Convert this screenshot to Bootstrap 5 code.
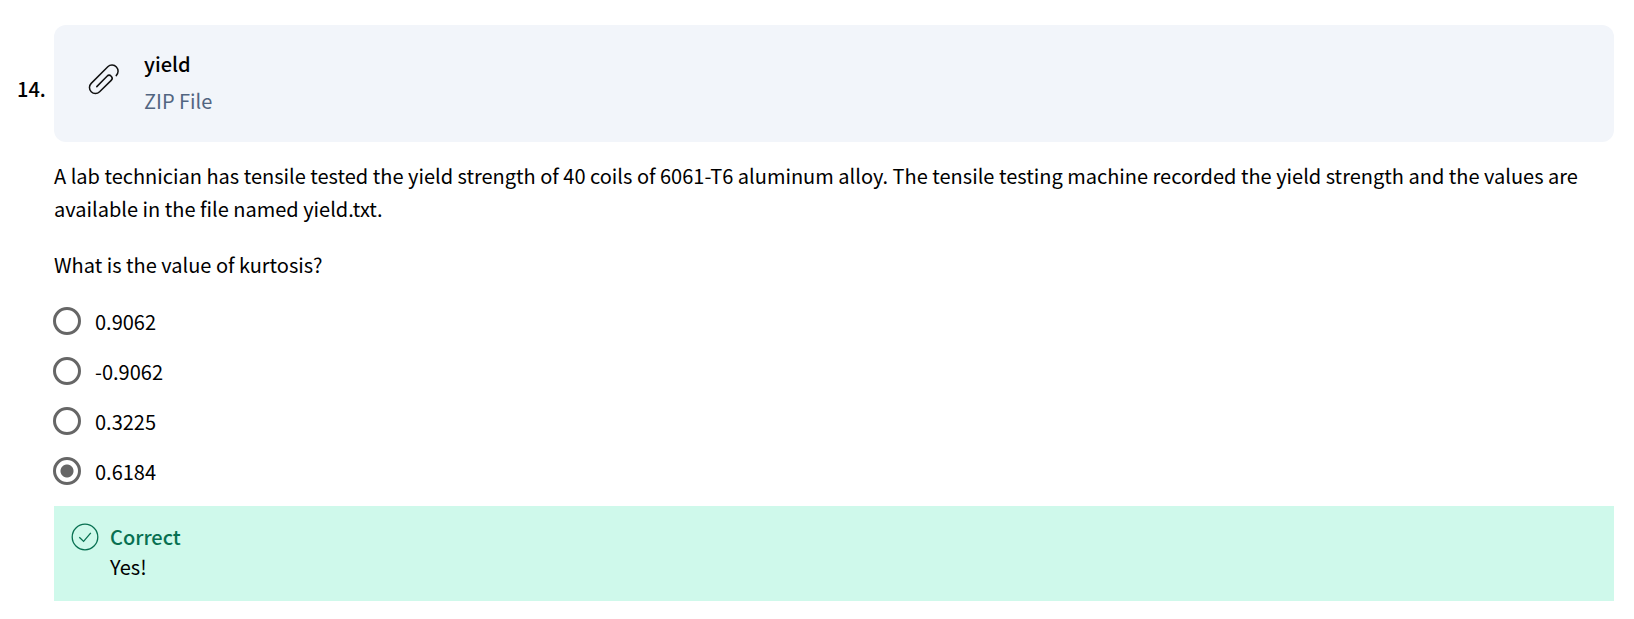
<!DOCTYPE html>
<html lang="en">
<head>
<meta charset="utf-8">
<meta name="viewport" content="width=device-width, initial-scale=1">
<title>Question 14</title>
<link href="https://cdn.jsdelivr.net/npm/bootstrap@5.3.0/dist/css/bootstrap.min.css" rel="stylesheet">
<style>
body{font-family:"Noto Sans CJK SC",sans-serif;font-size:20px;line-height:33px;color:#000;background:#fff}
.question{padding:25px 20px 16px 17px}
.q-number{width:37px;flex:none;font-weight:500;padding-top:47px}
.attachment{background:#f2f5fa;border-radius:12px;padding:21px 34px 22px;gap:24px;margin-bottom:17px}
.attachment svg{margin-top:17px}
.attachment a{color:#000;font-weight:500;line-height:36px}
.file-kind{color:#526581;line-height:38px}
.prompt{margin-bottom:23px}
.options{gap:17px;padding-top:1px}
.option{gap:14px}
.option input{appearance:none;width:28px;height:28px;margin:0 0 2px -1px;border:3px solid #666;border-radius:50%;background:#fff}
.option input:checked{background:radial-gradient(circle,#666 0 6px,#fff 7px)}
.feedback{background:#cff9eb;padding:16px 17px 19px;gap:11px;line-height:30px;margin-top:18px}
.feedback svg{margin-top:1px}
.verdict{color:#087051;font-weight:500}
</style>
</head>
<body>
<main class="question d-flex">
<div class="q-number">14.</div>
<div class="flex-grow-1">
<div class="attachment d-flex">
<svg class="flex-shrink-0" width="32" height="32" viewBox="0 0 32 32" fill="none" stroke="#111" stroke-width="1.5" stroke-linecap="round" aria-hidden="true"><path d="M28.2 12.6A6 6 0 0 0 19.8 3.8L3.2 20.4A5.9 5.9 0 0 0 11.6 28.8L23.2 17.4A2.9 2.9 0 0 0 19 13.2L8.8 23.6"/></svg>
<div><a href="#" class="text-decoration-none d-block">yield</a><div class="file-kind">ZIP File</div></div>
</div>
<p class="prompt">A lab technician has tensile tested the yield strength of 40 coils of 6061-T6 aluminum alloy. The tensile testing machine recorded the yield strength and the values are available in the file named yield.txt.</p>
<p class="prompt" id="ask">What is the value of kurtosis?</p>
<div class="options d-flex flex-column align-items-start" role="radiogroup" aria-labelledby="ask">
<label class="option d-flex align-items-center"><input type="radio" name="kurtosis">0.9062</label>
<label class="option d-flex align-items-center"><input type="radio" name="kurtosis">-0.9062</label>
<label class="option d-flex align-items-center"><input type="radio" name="kurtosis">0.3225</label>
<label class="option d-flex align-items-center"><input type="radio" name="kurtosis" checked>0.6184</label>
</div>
<div class="feedback d-flex">
<svg class="flex-shrink-0" width="28" height="28" viewBox="0 0 28 28" fill="none" stroke="#087051" stroke-width="1.3" aria-hidden="true"><circle cx="14" cy="14" r="12.8"/><path d="M8.3 14.2L12.6 18.4L19.8 9.8"/></svg>
<div><div class="verdict">Correct</div><div>Yes!</div></div>
</div>
</div>
</main>
<script src="https://cdn.jsdelivr.net/npm/bootstrap@5.3.0/dist/js/bootstrap.bundle.min.js"></script>
</body>
</html>
